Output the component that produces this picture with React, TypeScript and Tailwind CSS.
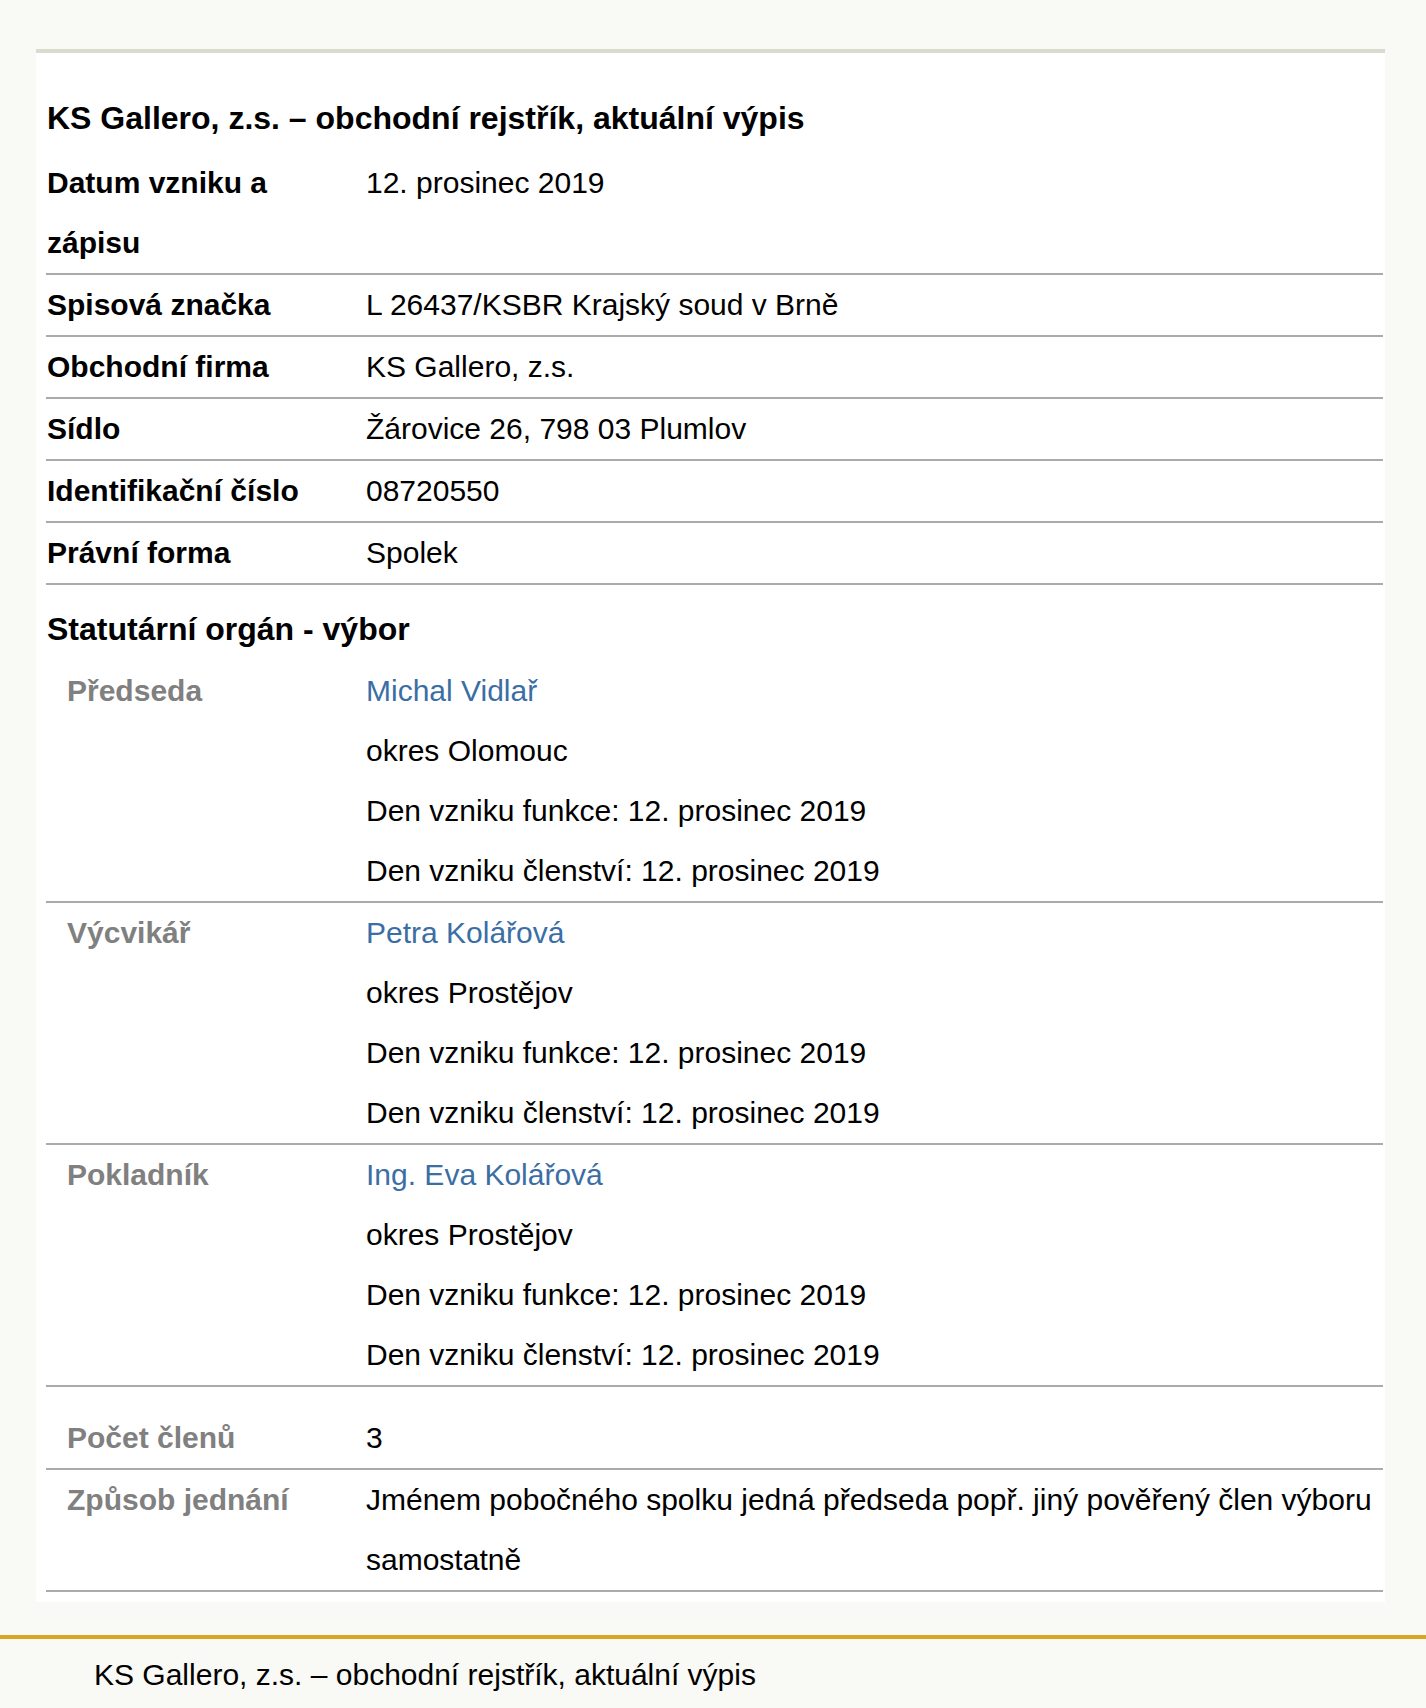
const LINK = 'text-[#3b6ea5]';

const basic: [string, string][] = [
  ['Datum vzniku a zápisu', '12. prosinec 2019'],
  ['Spisová značka', 'L 26437/KSBR Krajský soud v Brně'],
  ['Obchodní firma', 'KS Gallero, z.s.'],
  ['Sídlo', 'Žárovice 26, 798 03 Plumlov'],
  ['Identifikační číslo', '08720550'],
  ['Právní forma', 'Spolek'],
];

const members = [
  { role: 'Předseda', name: 'Michal Vidlař', okres: 'okres Olomouc' },
  { role: 'Výcvikář', name: 'Petra Kolářová', okres: 'okres Prostějov' },
  { role: 'Pokladník', name: 'Ing. Eva Kolářová', okres: 'okres Prostějov' },
];

function Row({ label, sub, children }: { label: string; sub?: boolean; children: React.ReactNode }) {
  return (
    <div className="grid grid-cols-[320px_1fr] border-b-2 border-[#aaaaaa]">
      <div className={sub ? 'pl-[21px] pr-2 font-bold text-[#808080]' : 'pl-[1px] pr-2 font-bold'}>{label}</div>
      <div>{children}</div>
    </div>
  );
}

export default function App() {
  return (
    <div className="min-h-screen bg-[#f9f9f5] pt-[49px] font-['Liberation_Sans',Arial,sans-serif] text-[30px] leading-[60px] text-black">
      <div className="ml-[36px] w-[1349px] bg-white border-t-4 border-[#dadbcf] pt-[33px] pb-[10px] pl-[10px] pr-[2px]">
        <h1 className="pl-[1px] mb-[3px] text-[32px] leading-[64px] font-bold">
          KS Gallero, z.s. – obchodní rejstřík, aktuální výpis
        </h1>

        {basic.map(([k, v]) => (
          <Row key={k} label={k}>{v}</Row>
        ))}

        <h2 className="pl-[1px] mt-[12px] text-[32px] leading-[64px] font-bold">Statutární orgán - výbor</h2>

        {members.map((m) => (
          <Row key={m.role} label={m.role} sub>
            <div className={LINK}>{m.name}</div>
            <div>{m.okres}</div>
            <div>Den vzniku funkce: 12. prosinec 2019</div>
            <div>Den vzniku členství: 12. prosinec 2019</div>
          </Row>
        ))}

        <div className="mt-[21px]">
          <Row label="Počet členů" sub>3</Row>
          <Row label="Způsob jednání" sub>
            Jménem pobočného spolku jedná předseda popř. jiný pověřený člen výboru samostatně
          </Row>
        </div>
      </div>

      <footer className="mt-[33px] border-t-4 border-[#daa520] pl-[94px] pt-[6px] pb-[20px]">
        KS Gallero, z.s. – obchodní rejstřík, aktuální výpis
      </footer>
    </div>
  );
}
